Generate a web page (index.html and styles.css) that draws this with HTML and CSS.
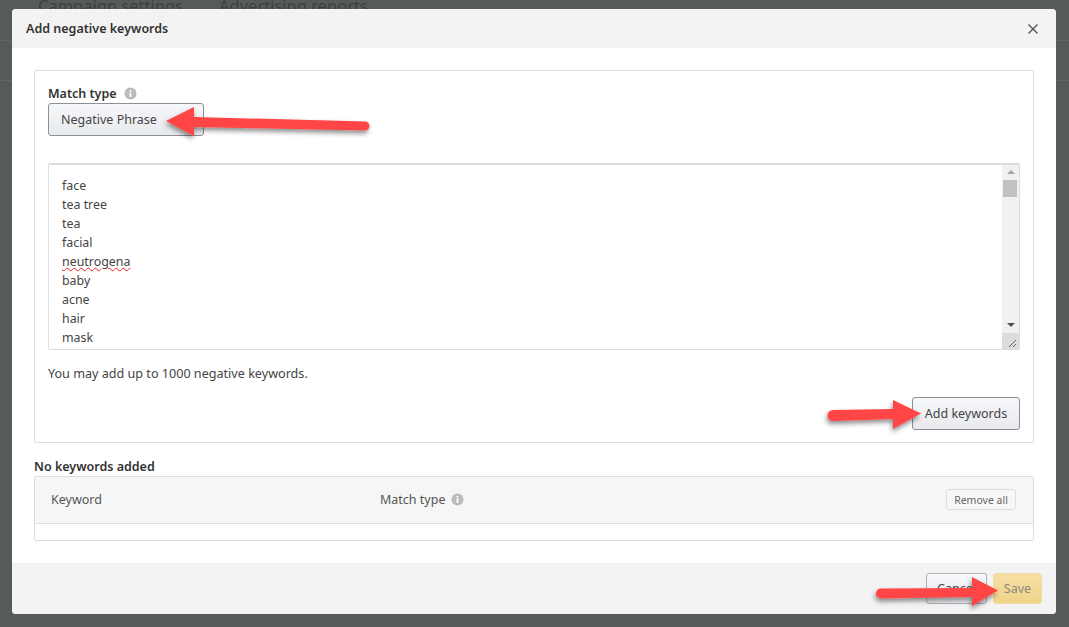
FILE: index.html
```html
<html>
<head>
  <title>Add negative keywords</title>
  <link rel="stylesheet" href="styles.css">
</head>
<body>
  <div class="backdrop">
    <div class="page-tabs">
      <span>Campaign settings</span>
      <span>Advertising reports</span>
    </div>
    <div class="page-line"></div>
  </div>

  <div class="modal">
    <div class="modal-header">
      <div class="modal-title">Add negative keywords</div>
      <svg class="close-icon" width="12" height="12" viewBox="0 0 12 12">
        <path d="M1.5 1.5L10.5 10.5M10.5 1.5L1.5 10.5" stroke="#555" stroke-width="1.4" fill="none"/>
      </svg>
    </div>

    <div class="modal-body">
      <div class="panel">
        <div class="field-label">
          <b>Match type</b>
          <svg class="info-icon" width="13" height="13" viewBox="0 0 13 13">
            <circle cx="6.5" cy="6.5" r="6" fill="#bbb"/>
            <rect x="5.6" y="5.6" width="1.8" height="4.4" fill="#fff"/>
            <rect x="5.6" y="3" width="1.8" height="1.7" fill="#fff"/>
          </svg>
        </div>
        <button class="btn match-btn">Negative Phrase</button>

        <div class="keyword-box">
          <div class="keyword-list">
            <div>face</div>
            <div>tea tree</div>
            <div>tea</div>
            <div>facial</div>
            <div><span class="misspelled">neutrogena</span></div>
            <div>baby</div>
            <div>acne</div>
            <div>hair</div>
            <div>mask</div>
          </div>
          <div class="scrollbar">
            <div class="scroll-up"></div>
            <div class="scroll-thumb"></div>
            <div class="scroll-track"></div>
            <div class="scroll-down"></div>
            <div class="scroll-corner">
              <svg width="16" height="16" viewBox="0 0 16 16">
                <path d="M7 14L14 7M11 14L14 11" stroke="#666" stroke-width="1" fill="none"/>
              </svg>
            </div>
          </div>
        </div>

        <div class="hint">You may add up to 1000 negative keywords.</div>

        <div class="panel-actions">
          <button class="btn add-btn">Add keywords</button>
        </div>
      </div>

      <div class="table-title">No keywords added</div>
      <div class="table">
        <div class="table-head">
          <div class="col-keyword">Keyword</div>
          <div class="col-match">
            Match type
            <svg class="info-icon" width="13" height="13" viewBox="0 0 13 13">
              <circle cx="6.5" cy="6.5" r="6" fill="#bbb"/>
              <rect x="5.6" y="5.6" width="1.8" height="4.4" fill="#fff"/>
              <rect x="5.6" y="3" width="1.8" height="1.7" fill="#fff"/>
            </svg>
          </div>
          <button class="remove-btn">Remove all</button>
        </div>
        <div class="table-row"></div>
      </div>
    </div>

    <div class="modal-footer">
      <button class="btn cancel-btn">Cancel</button>
      <button class="save-btn">Save</button>
    </div>
  </div>

  <!-- red arrows drawn over the screenshot -->
  <svg class="arrows" width="1069" height="627" viewBox="0 0 1069 627">
    <defs>
      <filter id="arrowShadow" x="-20%" y="-50%" width="140%" height="220%">
        <feDropShadow dx="-1" dy="3" stdDeviation="2.5" flood-color="#000" flood-opacity="0.45"/>
      </filter>
    </defs>
    <g fill="#ff4545" filter="url(#arrowShadow)">
      <path d="M194 117L365 121.500A4 4 0 0 1 365 130.500L194 127L194 136L166 121L194 107Z"/>
      <path d="M893 409L893 400L921 413.500L893 429L893 419L833 421A5 5 0 0 1 833 410Z"/>
      <path d="M972 588L972 577L998 590.500L972 606L972 597L881 598.500A5 5 0 0 1 881 588.500Z"/>
    </g>
  </svg>
</body>
</html>
```

FILE: styles.css
```css
body {
  margin: 0;
  width: 1069px;
  height: 627px;
  overflow: hidden;
  background-color: #565b5a;
  font-family: 'Noto Sans', sans-serif;
  font-size: 13px;
  color: #444;
  position: relative;
}

button {
  font-family: inherit;
}

.backdrop {
  height: 86px;
  border-bottom: 1px solid #626766;
}

.page-tabs {
  display: flex;
  gap: 36px;
  padding: 0 0 0 38px;
  margin-top: -6px;
  height: 24px;
  font-size: 16.500px;
  color: #3c403f;
}

.page-line {
  height: 1px;
  margin-top: 22px;
  background-color: #606564;
}

.modal {
  position: absolute;
  left: 12px;
  top: 9px;
  width: 1044px;
  height: 605px;
  display: flex;
  flex-direction: column;
  background-color: #fff;
  border-radius: 4px;
  overflow: hidden;
}

.modal-header {
  height: 39px;
  flex-shrink: 0;
  display: flex;
  align-items: center;
  justify-content: space-between;
  padding: 0 17px 0 14px;
  background-color: #f3f3f3;
}

.modal-title {
  font-size: 12.500px;
  font-weight: 600;
  color: #333;
}

.modal-body {
  flex: 1;
  padding: 22px 22px 0 22px;
}

.panel {
  height: 373px;
  box-sizing: border-box;
  padding: 12px 13px 0 13px;
  border: 1px solid #ddd;
  border-radius: 2px;
}

.field-label {
  display: flex;
  align-items: center;
  gap: 7px;
  height: 20px;
  font-size: 12.500px;
  color: #333;
}

.field-label b {
  font-weight: 600;
}

.btn {
  display: block;
  box-sizing: border-box;
  border: 1px solid #8d9096;
  border-radius: 3px;
  background: linear-gradient(#f7f8fa, #e7e9ec);
  color: #444;
  font-size: 12.500px;
  padding: 0;
}

.match-btn {
  width: 156px;
  height: 33px;
  text-align: left;
  padding-left: 12px;
}

.keyword-box {
  display: flex;
  height: 187px;
  margin-top: 27px;
  box-sizing: border-box;
  border: 1px solid #ddd;
  border-top-width: 2px;
  border-radius: 2px;
}

.keyword-list {
  flex: 1;
  padding: 11px 13px 0 13px;
  line-height: 19px;
  font-size: 12.400px;
}

.misspelled {
  text-decoration: underline wavy #d22;
  text-decoration-thickness: 1px;
}

.scrollbar {
  width: 17px;
  display: flex;
  flex-direction: column;
  background-color: #f1f1f1;
}

.scroll-up,
.scroll-down {
  height: 15px;
  position: relative;
}

.scroll-up::after {
  content: '';
  position: absolute;
  left: 5px;
  top: 5px;
  border-left: 4px solid transparent;
  border-right: 4px solid transparent;
  border-bottom: 4px solid #a3a3a3;
}

.scroll-down::after {
  content: '';
  position: absolute;
  left: 5px;
  top: 5px;
  border-left: 4px solid transparent;
  border-right: 4px solid transparent;
  border-top: 4px solid #505050;
}

.scroll-thumb {
  height: 17px;
  margin: 0 2px 0 1px;
  background-color: #c1c1c1;
}

.scroll-track {
  flex: 1;
}

.scroll-corner {
  height: 16px;
  background-color: #dcdcdc;
}

.scroll-corner svg {
  display: block;
}

.hint {
  margin-top: 14px;
  height: 20px;
  line-height: 20px;
  font-size: 12.600px;
}

.panel-actions {
  display: flex;
  justify-content: flex-end;
  margin-top: 13px;
}

.add-btn {
  width: 108px;
  height: 33px;
}

.table-title {
  margin-top: 15px;
  height: 18px;
  line-height: 18px;
  font-size: 12.500px;
  font-weight: 600;
  color: #333;
}

.table {
  border: 1px solid #ddd;
  border-radius: 2px;
}

.table-head {
  display: flex;
  align-items: center;
  height: 47px;
  padding: 0 17px 1px 16px;
  box-sizing: border-box;
  background-color: #f6f6f6;
  border-bottom: 1px solid #ddd;
  font-size: 12.500px;
  color: #555;
}

.col-keyword {
  width: 329px;
}

.col-match {
  flex: 1;
  display: flex;
  align-items: center;
  gap: 6px;
}

.remove-btn {
  width: 70px;
  height: 21px;
  padding: 0;
  border: 1px solid #ddd;
  border-radius: 3px;
  background-color: #f7f7f8;
  color: #666;
  font-size: 10.500px;
}

.table-row {
  height: 16px;
}

.modal-footer {
  height: 51px;
  display: flex;
  justify-content: flex-end;
  align-items: flex-start;
  gap: 6px;
  padding: 10px 14px 0 0;
  box-sizing: border-box;
  background-color: #f3f3f3;
}

.cancel-btn {
  width: 61px;
  height: 31px;
  border-color: #adb1b8;
}

.save-btn {
  width: 49px;
  height: 31px;
  padding: 0;
  border: 1px solid #f0dca6;
  border-radius: 3px;
  background: linear-gradient(#f7dfa5, #f0d48a);
  color: #8a8a80;
  font-size: 12.500px;
}

.arrows {
  position: absolute;
  left: 0;
  top: 0;
}
```
